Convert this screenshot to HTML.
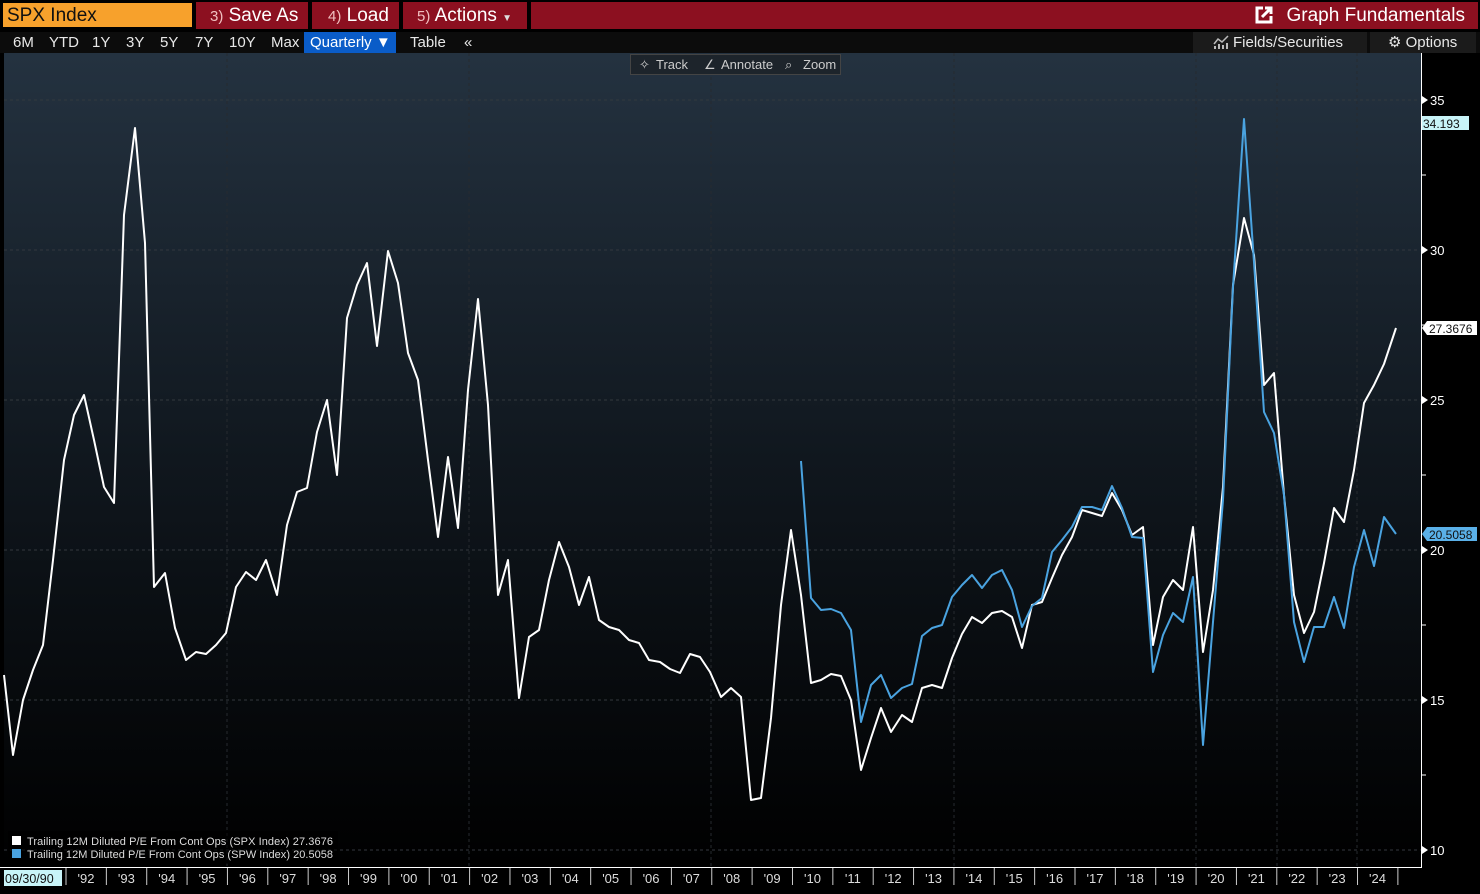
<!DOCTYPE html>
<html><head><meta charset="utf-8"><style>
*{margin:0;padding:0;box-sizing:border-box}
body{width:1480px;height:894px;background:#000;overflow:hidden;font-family:"Liberation Sans",sans-serif;color:#fff;position:relative}
.top{position:absolute;left:0;top:0;width:1480px;height:30px;background:#000}
.red{position:absolute;top:2px;height:27px;background:#8c1020;font-size:19px;line-height:27px;color:#fff}
.tb{position:absolute;top:32px;left:0;width:1480px;height:21px;background:#0c0c0c;font-size:15px;line-height:21px}
.tb span{position:absolute;top:0;color:#e8e8e8}
</style></head><body>
<div class="top">
 <div style="position:absolute;left:3px;top:3px;width:189px;height:24px;background:#f7a12c;color:#111;font-size:19px;line-height:25px;padding-left:4px">SPX Index</div>
 <div class="red" style="left:196px;width:112px;padding-left:14px"><span style="font-size:15px;color:#f0c0c0">3)</span> Save As</div>
 <div class="red" style="left:312px;width:87px;padding-left:16px"><span style="font-size:15px;color:#f0c0c0">4)</span> Load</div>
 <div class="red" style="left:403px;width:124px;padding-left:14px"><span style="font-size:15px;color:#f0c0c0">5)</span> Actions <span style="font-size:10px;color:#ddd">▼</span></div>
 <div class="red" style="left:531px;width:947px;text-align:right;padding-right:13px"><svg width="18" height="18" viewBox="0 0 18 18" style="vertical-align:-3px;margin-right:14px"><path d="M8,2 H2 V16 H16 V10" fill="none" stroke="#fff" stroke-width="3"/><path d="M7,11 L15,3 M10,2 H16 V8" fill="none" stroke="#fff" stroke-width="3"/></svg>Graph Fundamentals</div>
</div>
<div class="tb">
 <span style="left:13px">6M</span><span style="left:49px">YTD</span><span style="left:92px">1Y</span><span style="left:126px">3Y</span><span style="left:160px">5Y</span><span style="left:195px">7Y</span><span style="left:229px">10Y</span><span style="left:271px">Max</span>
 <span style="left:304px;width:92px;height:21px;background:#0a5cc8;padding-left:6px;color:#fff">Quarterly ▼</span>
 <span style="left:410px">Table</span><span style="left:464px">«</span>
 <span style="left:1193px;width:174px;height:21px;background:#1b1b1b;padding-left:20px"><svg width="16" height="14" viewBox="0 0 16 14" style="vertical-align:-2px;margin-right:4px"><path d="M1,9 L5,4 L9,7 L15,1" fill="none" stroke="#bbb" stroke-width="1.5"/><rect x="1" y="11" width="2" height="3" fill="#bbb"/><rect x="5" y="9" width="2" height="5" fill="#bbb"/><rect x="9" y="10" width="2" height="4" fill="#bbb"/><rect x="13" y="8" width="2" height="6" fill="#bbb"/></svg>Fields/Securities</span>
 <span style="left:1370px;width:106px;height:21px;background:#1b1b1b;padding-left:18px">⚙ Options</span>
</div>
<svg width="1480" height="894" style="position:absolute;left:0;top:0" xmlns="http://www.w3.org/2000/svg">
<defs><linearGradient id="g" x1="0" y1="0" x2="0" y2="1"><stop offset="0" stop-color="#243240"/><stop offset="0.5" stop-color="#10171e"/><stop offset="1" stop-color="#000"/></linearGradient></defs>
<rect x="4" y="53" width="1417" height="814" fill="url(#g)"/>
<g stroke="#33383e" stroke-dasharray="3,3" stroke-width="1">
<line x1="4" y1="100" x2="1421" y2="100"/><line x1="4" y1="250" x2="1421" y2="250"/><line x1="4" y1="400" x2="1421" y2="400"/><line x1="4" y1="550" x2="1421" y2="550"/><line x1="4" y1="700" x2="1421" y2="700"/><line x1="4" y1="850" x2="1421" y2="850"/>
</g>
<g stroke="#262a2f" stroke-dasharray="3,3" stroke-width="1">
<line x1="227" y1="53" x2="227" y2="867"/><line x1="469" y1="53" x2="469" y2="867"/><line x1="711" y1="53" x2="711" y2="867"/><line x1="954" y1="53" x2="954" y2="867"/><line x1="1196" y1="53" x2="1196" y2="867"/><line x1="1277" y1="53" x2="1277" y2="867"/><line x1="1357" y1="53" x2="1357" y2="867"/>
</g>
<rect x="630.5" y="54.5" width="210" height="20" fill="#1d242b" stroke="#444"/>
<g font-size="13" fill="#ccc" font-family="Liberation Sans"><text x="639" y="69">✧</text><text x="656" y="69">Track</text><text x="704" y="69">∠</text><text x="721" y="69">Annotate</text><text x="785" y="69">⌕</text><text x="803" y="69">Zoom</text></g>
<polyline fill="none" stroke="#fff" stroke-width="2" stroke-linejoin="round" points="4,675 13,755 23,700 33,670 43,645 53,560 64,460 74,415 84,395 94,440 104,487 114,503 124,215 135,128 145,243 154,587 165,573 175,628 186,660 196,652 206,654 216,645 226,633 236,587 246,572 256,580 266,560 277,595 287,525 297,492 307,488 317,432 327,400 337,475 347,318 357,285 367,263 377,346 388,251 398,283 408,353 418,380 428,460 438,537 448,457 458,528 468,390 478,299 488,405 498,595 508,560 519,698 529,637 539,630 549,580 559,542 569,567 579,605 589,577 599,620 609,627 619,630 629,640 639,643 649,660 660,662 670,669 680,673 690,654 700,657 710,672 721,697 731,688 741,697 751,800 761,798 771,718 781,605 791,530 801,595 811,683 821,680 831,674 841,676 851,700 861,770 871,738 881,708 891,732 902,715 912,722 922,688 932,685 942,688 952,658 962,634 972,617 982,623 992,613 1002,611 1012,617 1022,648 1032,605 1042,602 1052,578 1062,555 1072,537 1082,510 1092,513 1102,516 1112,493 1122,510 1132,535 1143,527 1153,645 1163,597 1173,580 1183,590 1193,527 1203,652 1213,590 1223,487 1233,285 1244,218 1254,255 1264,385 1274,373 1284,495 1294,595 1304,633 1314,612 1324,563 1334,508 1344,522 1354,470 1364,403 1374,385 1384,364 1396,328"/>
<polyline fill="none" stroke="#4aa3e0" stroke-width="2" stroke-linejoin="round" points="801,461 811,598 821,610 831,609 841,613 851,630 861,722 871,685 881,675 891,698 902,688 912,684 922,636 932,628 942,625 952,597 962,585 972,575 982,588 992,575 1002,570 1012,590 1022,627 1032,606 1042,598 1052,552 1062,540 1072,527 1082,507 1092,507 1102,510 1112,486 1122,508 1132,537 1143,538 1153,672 1163,635 1173,613 1183,622 1193,577 1203,745 1213,622 1223,500 1233,287 1244,119 1254,262 1264,412 1274,433 1284,495 1294,622 1304,662 1314,627 1324,627 1334,597 1344,628 1354,567 1364,530 1374,566 1384,517 1396,534"/>
<rect x="8" y="831" width="330" height="33" fill="#000" opacity="0.6"/>
<rect x="12" y="836" width="9" height="9" fill="#fff"/><rect x="12" y="849" width="9" height="9" fill="#4aa3e0"/>
<g font-size="11" fill="#ddd" font-family="Liberation Sans"><text x="27" y="845" textLength="306">Trailing 12M Diluted P/E From Cont Ops (SPX Index)  27.3676</text><text x="27" y="858" textLength="306">Trailing 12M Diluted P/E From Cont Ops (SPW Index)  20.5058</text></g>
<line x1="1421.5" y1="53" x2="1421.5" y2="868" stroke="#fff"/>
<line x1="0" y1="867.5" x2="1422" y2="867.5" stroke="#fff"/>
<g fill="#fff" font-size="13" font-family="Liberation Sans">
<text x="1430" y="105">35</text><text x="1430" y="255">30</text><text x="1430" y="405">25</text><text x="1430" y="555">20</text><text x="1430" y="705">15</text><text x="1430" y="855">10</text>
<path d="M1422,96 l6,4 l-6,4z M1422,246 l6,4 l-6,4z M1422,396 l6,4 l-6,4z M1422,546 l6,4 l-6,4z M1422,696 l6,4 l-6,4z M1422,846 l6,4 l-6,4z"/>
</g>
<g stroke="#fff"><line x1="1422" y1="175" x2="1426" y2="175"/><line x1="1422" y1="325" x2="1426" y2="325"/><line x1="1422" y1="475" x2="1426" y2="475"/><line x1="1422" y1="625" x2="1426" y2="625"/><line x1="1422" y1="775" x2="1426" y2="775"/></g>
<rect x="1422" y="116" width="47" height="14" fill="#c8f4f8"/><text x="1423" y="128" font-size="12" fill="#111" font-family="Liberation Sans">34.193</text>
<path d="M1422,328 l5,-7 h50 v14 h-50z" fill="#fff"/><text x="1429" y="333" font-size="12" fill="#111" font-family="Liberation Sans">27.3676</text>
<path d="M1422,534 l5,-7 h50 v14 h-50z" fill="#5ab0e8"/><text x="1429" y="539" font-size="12" fill="#111" font-family="Liberation Sans">20.5058</text>
<rect x="4" y="870" width="58" height="16" fill="#c8f4f8"/><text x="5" y="883" font-size="12.5" fill="#111" font-family="Liberation Sans">09/30/90</text>
<g id="xt" fill="#ddd" font-size="13" font-family="Liberation Sans" text-anchor="middle"></g>
<g id="tk" stroke="#ccc"></g>
</svg>
<script>
var xt=document.getElementById('xt'),tk=document.getElementById('tk'),ns='http://www.w3.org/2000/svg';
for(var k=0;k<=33;k++){var x=66+40.36*k;var l=document.createElementNS(ns,'line');l.setAttribute('x1',x);l.setAttribute('x2',x);l.setAttribute('y1',868);l.setAttribute('y2',885);tk.appendChild(l);
if(k<33){var y=(92+k)%100;var t=document.createElementNS(ns,'text');t.setAttribute('x',x+20);t.setAttribute('y',883);t.textContent="'"+(y<10?'0'+y:y);xt.appendChild(t);}}
</script>
</body></html>
